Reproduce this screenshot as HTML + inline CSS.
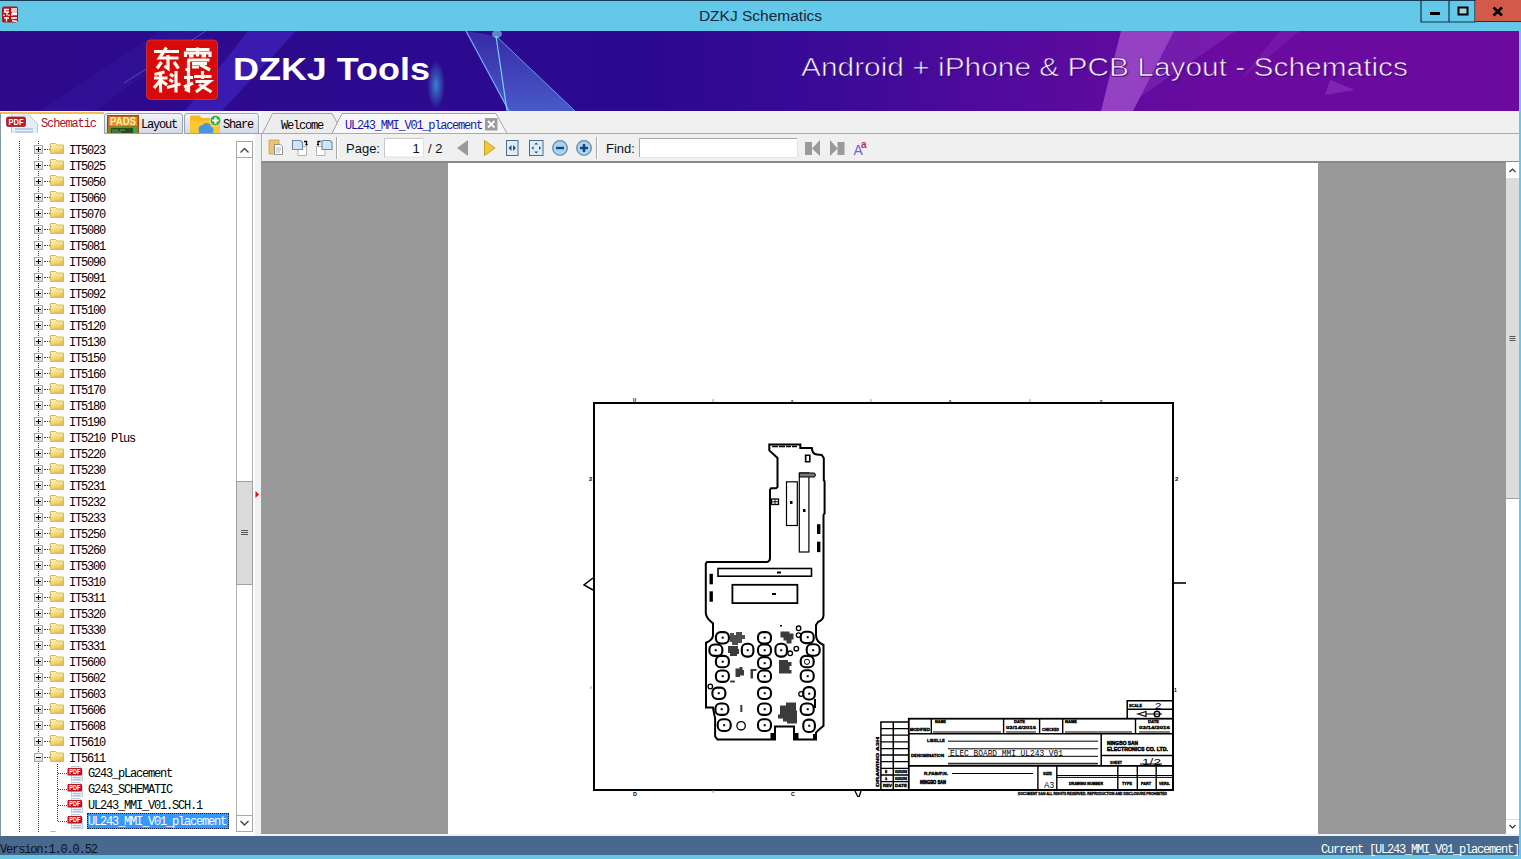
<!DOCTYPE html>
<html><head><meta charset="utf-8">
<style>
*{margin:0;padding:0;box-sizing:border-box}
html,body{width:1521px;height:859px;overflow:hidden;background:#64c9e9;font-family:"Liberation Sans",sans-serif;position:relative}
.abs{position:absolute}
.mono{font-family:"Liberation Mono",monospace;font-size:12px;letter-spacing:-1.2px;white-space:pre}
#topline{left:0;top:0;width:1521px;height:1px;background:#173a52}
#title{left:0;top:1px;width:1521px;height:30px;text-align:center;font-size:15.5px;line-height:30px;color:#10283a;padding-left:0}
#banner{left:0;top:31px;width:1519px;height:80px;overflow:hidden}
#tabbar{left:0;top:111px;width:261px;height:22px;background:#f4f6f9}
.ltab{z-index:2;top:113px;height:21px;border:1px solid #98a4b4;background:linear-gradient(#f2f3f9,#d6dae8);border-radius:3px 3px 0 0}
#tabSch{left:0;top:112px;width:104px;height:22px;background:#fff;border-top:2px solid #f5bd4a;border-left:1px solid #8a9aa4}
#leftpanel{left:0;top:133px;width:253px;height:703px;background:#fff;border-left:1px solid #7e98a2;overflow:hidden}
#splitter{left:253px;top:133px;width:8px;height:703px;border-top:1px solid #a4aab4;background:linear-gradient(90deg,#fbfcfd 0,#fbfcfd 2px,#eef2f5 2px)}
#doctabs{left:261px;top:111px;width:1258px;height:22px;background:#f0f0f0}
#toolbar{left:261px;top:133px;width:1258px;height:30px;background:#f0f0f0;border-top:1px solid #a4acb4;border-bottom:2px solid #8a8a8a;border-left:1px solid #a4acb4}
#docarea{left:261px;top:163px;width:1245px;height:671px;background:#999999}
#page{left:187px;top:0;width:870px;height:671px;background:#fff}
#vscroll{left:1506px;top:162px;width:13px;height:672px;background:#fff}
#strip{left:261px;top:834px;width:1258px;height:2px;background:#eef2f6}
#status{left:0;top:836px;width:1519px;height:19px;background:#48688e}
.row{position:absolute;left:0;height:16px;width:236px}
.row .t{position:absolute;left:69px;top:2px;font-family:"Liberation Mono",monospace;font-size:12px;letter-spacing:-1.2px;line-height:16px;color:#000;white-space:pre}
.row .t2{position:absolute;left:87px;top:1px;font-family:"Liberation Mono",monospace;font-size:12px;letter-spacing:-1.2px;line-height:16px;color:#000;white-space:pre;padding:0 1px;height:16px}
.row .t2.sel{background:#3399ff;color:#fff;outline:1px dotted #0a2050;outline-offset:-1px;left:87px;top:0;width:142px;height:16px;line-height:18px}
.fd{position:absolute;left:50px;top:1px}
.pb{position:absolute;left:34px;top:4px;width:9px;height:9px;border:1px solid #a8a8a8;background:linear-gradient(#fbfbfb,#dcdcdc)}
.pb .h{position:absolute;left:1px;top:3px;width:5px;height:1px;background:#000}
.pb .v{position:absolute;left:3px;top:1px;width:1px;height:5px;background:#000}
.dh{position:absolute;left:44px;top:8px;width:6px;border-top:1px dotted #444}
.dh2{position:absolute;left:58px;top:8px;width:9px;border-top:1px dotted #444}
.pdf{position:absolute;left:67px;top:0px;width:17px;height:16px}
.tbtxt{position:absolute;font-size:13px;color:#111;line-height:16px;margin-top:1px}
.sep{position:absolute;top:137px;width:1px;height:22px;background:#a8a8a8;border-right:1px solid #fff}
</style></head><body>
<div id="topline" class="abs"></div>
<div id="title" class="abs">DZKJ Schematics</div>
<svg class="abs" style="left:0;top:0" width="1521" height="31">
<rect x="2" y="6.5" width="16" height="16" rx="2" fill="#b01414"/>
<g stroke="#fff" stroke-width="1.3" fill="none"><path d="M4 9.5h5M5.5 9l-1 3h4.5M7 11.5v4M4.5 14.5l-1 1.5M8.5 14.5l1 1.5 M11 9h6M11 11h6M12 13v3M12 13h5M13 14.5h4M4 18h5M6.5 17v4.5M11 18h6M14 17v2M12 20.5l5 1"/></g>
<path d="M1421 0 V22 H1475 V0 M1449 0 V22" fill="none" stroke="#163048" stroke-width="1.2"/>
<rect x="1475.5" y="0" width="45.5" height="21.5" fill="#d35a4a"/>
<path d="M1475.5 21.5 H1521" stroke="#163048" stroke-width="1"/>
<rect x="1430" y="12" width="10" height="3" fill="#000"/>
<rect x="1458.5" y="7.5" width="9" height="7" fill="#9cd8ea" stroke="#000" stroke-width="2"/>
<path d="M1493.5 7.5 L1502 15.5 M1502 7.5 L1493.5 15.5" stroke="#000" stroke-width="2.6"/>
</svg>
<div id="banner" class="abs"><svg width="1519" height="80" viewBox="0 31 1519 80" style="position:absolute;left:0;top:0">
<defs>
<linearGradient id="bg1" gradientUnits="userSpaceOnUse" x1="0" y1="0" x2="1519" y2="0">
<stop offset="0" stop-color="#2e0a8c"/><stop offset="0.3" stop-color="#2c0a90"/><stop offset="0.42" stop-color="#2a0890"/><stop offset="0.55" stop-color="#3c0a98"/><stop offset="0.7" stop-color="#5a0a9e"/><stop offset="0.8" stop-color="#6a0aa0"/><stop offset="1" stop-color="#6c0a9e"/>
</linearGradient>
<linearGradient id="tri" x1="0" y1="0" x2="0" y2="1"><stop offset="0" stop-color="#5a8ae8" stop-opacity="0.25"/><stop offset="1" stop-color="#5a90f0" stop-opacity="0.6"/></linearGradient>
<radialGradient id="glow" cx="0.5" cy="0.5" r="0.5"><stop offset="0" stop-color="#3aa0e0" stop-opacity="0.8"/><stop offset="1" stop-color="#3aa0e0" stop-opacity="0"/></radialGradient>
<filter id="sh" x="-5%" y="-20%" width="110%" height="140%"><feDropShadow dx="1" dy="1" stdDeviation="1" flood-color="#200040" flood-opacity="0.8"/></filter>
</defs>
<rect x="0" y="31" width="1519" height="80" fill="url(#bg1)"/>
<polygon points="160,31 205,31 95,111 40,111" fill="#3420a8" opacity="0.3"/><polyline points="206,31 124,83" stroke="#8080f0" stroke-width="1" opacity="0.5" fill="none"/>
<polygon points="248,31 296,31 222,111 185,111" fill="#4a30d8" opacity="0.45"/>
<polygon points="466,31 496,36 575,111 509,111" fill="url(#tri)"/>
<polyline points="466,31 509,111" stroke="#7ab0f8" stroke-width="1.2" fill="none"/>
<polyline points="496,36 507,111" stroke="#7ad0f8" stroke-width="1.2" fill="none"/>
<polyline points="496,36 575,111" stroke="#6a9af0" stroke-width="1" fill="none"/>
<ellipse cx="497" cy="34" rx="5" ry="4" fill="#9ff" opacity="0.5"/>
<ellipse cx="436" cy="85" rx="9" ry="24" fill="url(#glow)"/>
<polygon points="1121,31 1174,31 1133,111 1101,111" fill="#c070e0" opacity="0.55"/>
<polygon points="1174,31 1236,31 1150,90 1120,111" fill="#9040c8" opacity="0.35"/>
<polygon points="1280,31 1300,31 1240,80" fill="#9040c8" opacity="0.25"/>
<polygon points="1330,80 1355,90 1325,95" fill="#9a50d0" opacity="0.4"/>
<rect x="146.5" y="40" width="71" height="59.5" rx="4" fill="#d80a0a" stroke="#e04848" stroke-width="0.6"/>
<g stroke="#fff8f0" stroke-width="3.2" fill="none" stroke-linecap="butt" stroke-linejoin="miter">
<path d="M154 51.5 h25 M166.5 47.5 l-7 10.5 h19 M168 55 v13.5 l-3.5 -2.5 M161.5 62 l-4.5 6.5 M174 62 l4.5 6.5"/>
<path d="M186 49.5 h23.5 M197.5 47.5 v9 M185.5 57 v-4 h24.5 v4 M189 56 h4.5 M201.5 56 h4.5 M187.5 60 h22 M188.5 60 v9.5 l-3 0 M192 63.5 h15 M192 67 h7 M200 64.5 l10 5.5"/>
<path d="M164.5 72 l-10 2.5 M154 78 h13.5 M160.5 73 v19.5 M160.5 80 l-6.5 8 M161 80.5 l6 4.5 M170 74 l3.5 2.5 M169.5 79.5 l3.5 2.5 M167 87.5 l13.5 -3.5 M176 71 v21.5"/>
<path d="M184 77.5 h9 M188.5 71 v19.5 l-3.5 -1.5 M184 87 l9 -4 M194 76.5 h17.5 M202.5 71 v8 M195.5 81.5 h14 l-13.5 10.5 M199 84.5 l12.5 7.5"/>
</g>
<text x="233" y="79.5" font-family="Liberation Sans" font-weight="bold" font-size="30.5" fill="#fff" textLength="197" lengthAdjust="spacingAndGlyphs">DZKJ Tools</text>
<text x="802" y="76.5" font-family="Liberation Sans" font-size="26" fill="#1a0040" opacity="0.55" textLength="607" lengthAdjust="spacingAndGlyphs">Android + iPhone &amp; PCB Layout - Schematics</text><text x="801" y="75.5" font-family="Liberation Sans" font-size="26" fill="#fff" stroke="url(#bg1)" stroke-width="0.7" paint-order="fill" textLength="607" lengthAdjust="spacingAndGlyphs">Android + iPhone &amp; PCB Layout - Schematics</text>
</svg></div>
<div id="tabbar" class="abs"></div>
<div id="tabSch" class="abs"></div>
<div class="abs ltab" style="left:104px;width:79px"></div>
<div class="abs ltab" style="left:184px;width:75px"></div>
<svg class="abs" style="left:0;top:108px;z-index:3" width="261" height="25">
<!-- schematic pdf icon -->
<path d="M11.5 5.5 h16 l10 10 v17 h-26 z" fill="#e4eef6" stroke="#b8c8d8" stroke-width="1"/>
<path d="M15 21 h18 M15 24 h18 M17 27 h14" stroke="#a8c4e0" stroke-width="1.3"/>
<rect x="6.5" y="9" width="19" height="9.5" rx="1.5" fill="#c01828" stroke="#801018" stroke-width="0.6"/>
<text x="16" y="17" font-family="Liberation Sans" font-weight="bold" font-size="8.5" fill="#fff" text-anchor="middle" textLength="15" lengthAdjust="spacingAndGlyphs">PDF</text>
<!-- pads -->
<rect x="107.5" y="7.5" width="31" height="19" fill="#c86418" stroke="#9a4a10" stroke-width="1"/>
<rect x="109" y="9" width="28" height="9" fill="#e88a2a"/>
<text x="123" y="17.3" font-family="Liberation Sans" font-weight="bold" font-size="10.5" fill="#fff2a8" text-anchor="middle" textLength="26" lengthAdjust="spacingAndGlyphs">PADS</text>
<rect x="109" y="18.5" width="28" height="8" fill="#4aa032"/>
<rect x="111" y="20" width="22" height="6" fill="#2a4a22"/>
<path d="M112 22 h6 M120 22 h5 M112 24 h9" stroke="#6ac050" stroke-width="0.8"/>
<!-- share -->
<path d="M190 9 q0 -1.5 1.5 -1.5 h8 l2.5 2.5 h17 q1 0 1 1 v15 h-30 z" fill="#f8b820"/>
<path d="M190 12.5 h30 v13.5 h-30 z" fill="#fcc830"/>
<circle cx="202" cy="21" r="3.5" fill="#4a94e0"/><circle cx="206.5" cy="19.5" r="4.5" fill="#4a94e0"/><circle cx="210.5" cy="22" r="3" fill="#4a94e0"/><rect x="199" y="21" width="14" height="4" fill="#4a94e0"/>
<circle cx="215.5" cy="12.5" r="5.3" fill="#38a838" stroke="#e8f8e8" stroke-width="0.8"/>
<path d="M212.3 12.5 h6.4 M215.5 9.3 v6.4" stroke="#fff" stroke-width="2.2"/>
</svg>
<div class="abs mono" style="z-index:3;left:41px;top:116px;color:#a8102a;line-height:16px;letter-spacing:-1.1px">Schematic</div>
<div class="abs mono" style="z-index:3;left:141px;top:117px;color:#000;line-height:16px">Layout</div>
<div class="abs mono" style="z-index:3;left:223px;top:117px;color:#000;line-height:16px">Share</div>

<div id="leftpanel" class="abs">
<svg style="position:absolute;left:0;top:0" width="253" height="703">
<path d="M18.5 8 V699" stroke="#333" stroke-width="1" stroke-dasharray="1 1"/>
<path d="M37.5 8 V699" stroke="#333" stroke-width="1" stroke-dasharray="1 1"/>
<path d="M56.5 631 V688" stroke="#333" stroke-width="1" stroke-dasharray="1 1"/>
<rect x="235.5" y="8.5" width="16" height="690" fill="#fff" stroke="#b4b4b4"/>
<rect x="235.5" y="8.5" width="16" height="16" fill="#fff" stroke="#a8a8a8"/>
<path d="M239.5 19.5 l4 -4 l4 4" stroke="#444" fill="none" stroke-width="1.4"/>
<rect x="235.5" y="348.5" width="16" height="103" fill="#dadada" stroke="#a0a0a0"/>
<path d="M240 397.5 h7 M240 399.5 h7 M240 401.5 h7" stroke="#555" stroke-width="1"/>
<rect x="235.5" y="682.5" width="16" height="16" fill="#fff" stroke="#a8a8a8"/>
<path d="M239.5 688 l4 4 l4 -4" stroke="#444" fill="none" stroke-width="1.4"/>
</svg>
<div style="position:absolute;left:-1px;top:0;width:255px;height:699px;overflow:hidden"><div style="position:absolute;left:0;top:-133px;width:255px;height:860px">
<div class="row" style="top:141px"><span class="pb"><i class=h></i><i class=v></i></span><span class="dh"></span><svg class="fd" width="15" height="13" viewBox="0 0 15 13"><defs><linearGradient id="fg" x1="0" y1="0" x2="0.35" y2="1"><stop offset="0" stop-color="#fdf4c4"/><stop offset="0.6" stop-color="#f6dc88"/><stop offset="1" stop-color="#e8c050"/></linearGradient></defs><path d="M0.5 1.5 h5 l1.5 1.5 h6.5 v8.5 h-13 z" fill="url(#fg)" stroke="#dcb850" stroke-width="1"/></svg><span class="t">IT5023</span></div>
<div class="row" style="top:157px"><span class="pb"><i class=h></i><i class=v></i></span><span class="dh"></span><svg class="fd" width="15" height="13" viewBox="0 0 15 13"><defs><linearGradient id="fg" x1="0" y1="0" x2="0.35" y2="1"><stop offset="0" stop-color="#fdf4c4"/><stop offset="0.6" stop-color="#f6dc88"/><stop offset="1" stop-color="#e8c050"/></linearGradient></defs><path d="M0.5 1.5 h5 l1.5 1.5 h6.5 v8.5 h-13 z" fill="url(#fg)" stroke="#dcb850" stroke-width="1"/></svg><span class="t">IT5025</span></div>
<div class="row" style="top:173px"><span class="pb"><i class=h></i><i class=v></i></span><span class="dh"></span><svg class="fd" width="15" height="13" viewBox="0 0 15 13"><defs><linearGradient id="fg" x1="0" y1="0" x2="0.35" y2="1"><stop offset="0" stop-color="#fdf4c4"/><stop offset="0.6" stop-color="#f6dc88"/><stop offset="1" stop-color="#e8c050"/></linearGradient></defs><path d="M0.5 1.5 h5 l1.5 1.5 h6.5 v8.5 h-13 z" fill="url(#fg)" stroke="#dcb850" stroke-width="1"/></svg><span class="t">IT5050</span></div>
<div class="row" style="top:189px"><span class="pb"><i class=h></i><i class=v></i></span><span class="dh"></span><svg class="fd" width="15" height="13" viewBox="0 0 15 13"><defs><linearGradient id="fg" x1="0" y1="0" x2="0.35" y2="1"><stop offset="0" stop-color="#fdf4c4"/><stop offset="0.6" stop-color="#f6dc88"/><stop offset="1" stop-color="#e8c050"/></linearGradient></defs><path d="M0.5 1.5 h5 l1.5 1.5 h6.5 v8.5 h-13 z" fill="url(#fg)" stroke="#dcb850" stroke-width="1"/></svg><span class="t">IT5060</span></div>
<div class="row" style="top:205px"><span class="pb"><i class=h></i><i class=v></i></span><span class="dh"></span><svg class="fd" width="15" height="13" viewBox="0 0 15 13"><defs><linearGradient id="fg" x1="0" y1="0" x2="0.35" y2="1"><stop offset="0" stop-color="#fdf4c4"/><stop offset="0.6" stop-color="#f6dc88"/><stop offset="1" stop-color="#e8c050"/></linearGradient></defs><path d="M0.5 1.5 h5 l1.5 1.5 h6.5 v8.5 h-13 z" fill="url(#fg)" stroke="#dcb850" stroke-width="1"/></svg><span class="t">IT5070</span></div>
<div class="row" style="top:221px"><span class="pb"><i class=h></i><i class=v></i></span><span class="dh"></span><svg class="fd" width="15" height="13" viewBox="0 0 15 13"><defs><linearGradient id="fg" x1="0" y1="0" x2="0.35" y2="1"><stop offset="0" stop-color="#fdf4c4"/><stop offset="0.6" stop-color="#f6dc88"/><stop offset="1" stop-color="#e8c050"/></linearGradient></defs><path d="M0.5 1.5 h5 l1.5 1.5 h6.5 v8.5 h-13 z" fill="url(#fg)" stroke="#dcb850" stroke-width="1"/></svg><span class="t">IT5080</span></div>
<div class="row" style="top:237px"><span class="pb"><i class=h></i><i class=v></i></span><span class="dh"></span><svg class="fd" width="15" height="13" viewBox="0 0 15 13"><defs><linearGradient id="fg" x1="0" y1="0" x2="0.35" y2="1"><stop offset="0" stop-color="#fdf4c4"/><stop offset="0.6" stop-color="#f6dc88"/><stop offset="1" stop-color="#e8c050"/></linearGradient></defs><path d="M0.5 1.5 h5 l1.5 1.5 h6.5 v8.5 h-13 z" fill="url(#fg)" stroke="#dcb850" stroke-width="1"/></svg><span class="t">IT5081</span></div>
<div class="row" style="top:253px"><span class="pb"><i class=h></i><i class=v></i></span><span class="dh"></span><svg class="fd" width="15" height="13" viewBox="0 0 15 13"><defs><linearGradient id="fg" x1="0" y1="0" x2="0.35" y2="1"><stop offset="0" stop-color="#fdf4c4"/><stop offset="0.6" stop-color="#f6dc88"/><stop offset="1" stop-color="#e8c050"/></linearGradient></defs><path d="M0.5 1.5 h5 l1.5 1.5 h6.5 v8.5 h-13 z" fill="url(#fg)" stroke="#dcb850" stroke-width="1"/></svg><span class="t">IT5090</span></div>
<div class="row" style="top:269px"><span class="pb"><i class=h></i><i class=v></i></span><span class="dh"></span><svg class="fd" width="15" height="13" viewBox="0 0 15 13"><defs><linearGradient id="fg" x1="0" y1="0" x2="0.35" y2="1"><stop offset="0" stop-color="#fdf4c4"/><stop offset="0.6" stop-color="#f6dc88"/><stop offset="1" stop-color="#e8c050"/></linearGradient></defs><path d="M0.5 1.5 h5 l1.5 1.5 h6.5 v8.5 h-13 z" fill="url(#fg)" stroke="#dcb850" stroke-width="1"/></svg><span class="t">IT5091</span></div>
<div class="row" style="top:285px"><span class="pb"><i class=h></i><i class=v></i></span><span class="dh"></span><svg class="fd" width="15" height="13" viewBox="0 0 15 13"><defs><linearGradient id="fg" x1="0" y1="0" x2="0.35" y2="1"><stop offset="0" stop-color="#fdf4c4"/><stop offset="0.6" stop-color="#f6dc88"/><stop offset="1" stop-color="#e8c050"/></linearGradient></defs><path d="M0.5 1.5 h5 l1.5 1.5 h6.5 v8.5 h-13 z" fill="url(#fg)" stroke="#dcb850" stroke-width="1"/></svg><span class="t">IT5092</span></div>
<div class="row" style="top:301px"><span class="pb"><i class=h></i><i class=v></i></span><span class="dh"></span><svg class="fd" width="15" height="13" viewBox="0 0 15 13"><defs><linearGradient id="fg" x1="0" y1="0" x2="0.35" y2="1"><stop offset="0" stop-color="#fdf4c4"/><stop offset="0.6" stop-color="#f6dc88"/><stop offset="1" stop-color="#e8c050"/></linearGradient></defs><path d="M0.5 1.5 h5 l1.5 1.5 h6.5 v8.5 h-13 z" fill="url(#fg)" stroke="#dcb850" stroke-width="1"/></svg><span class="t">IT5100</span></div>
<div class="row" style="top:317px"><span class="pb"><i class=h></i><i class=v></i></span><span class="dh"></span><svg class="fd" width="15" height="13" viewBox="0 0 15 13"><defs><linearGradient id="fg" x1="0" y1="0" x2="0.35" y2="1"><stop offset="0" stop-color="#fdf4c4"/><stop offset="0.6" stop-color="#f6dc88"/><stop offset="1" stop-color="#e8c050"/></linearGradient></defs><path d="M0.5 1.5 h5 l1.5 1.5 h6.5 v8.5 h-13 z" fill="url(#fg)" stroke="#dcb850" stroke-width="1"/></svg><span class="t">IT5120</span></div>
<div class="row" style="top:333px"><span class="pb"><i class=h></i><i class=v></i></span><span class="dh"></span><svg class="fd" width="15" height="13" viewBox="0 0 15 13"><defs><linearGradient id="fg" x1="0" y1="0" x2="0.35" y2="1"><stop offset="0" stop-color="#fdf4c4"/><stop offset="0.6" stop-color="#f6dc88"/><stop offset="1" stop-color="#e8c050"/></linearGradient></defs><path d="M0.5 1.5 h5 l1.5 1.5 h6.5 v8.5 h-13 z" fill="url(#fg)" stroke="#dcb850" stroke-width="1"/></svg><span class="t">IT5130</span></div>
<div class="row" style="top:349px"><span class="pb"><i class=h></i><i class=v></i></span><span class="dh"></span><svg class="fd" width="15" height="13" viewBox="0 0 15 13"><defs><linearGradient id="fg" x1="0" y1="0" x2="0.35" y2="1"><stop offset="0" stop-color="#fdf4c4"/><stop offset="0.6" stop-color="#f6dc88"/><stop offset="1" stop-color="#e8c050"/></linearGradient></defs><path d="M0.5 1.5 h5 l1.5 1.5 h6.5 v8.5 h-13 z" fill="url(#fg)" stroke="#dcb850" stroke-width="1"/></svg><span class="t">IT5150</span></div>
<div class="row" style="top:365px"><span class="pb"><i class=h></i><i class=v></i></span><span class="dh"></span><svg class="fd" width="15" height="13" viewBox="0 0 15 13"><defs><linearGradient id="fg" x1="0" y1="0" x2="0.35" y2="1"><stop offset="0" stop-color="#fdf4c4"/><stop offset="0.6" stop-color="#f6dc88"/><stop offset="1" stop-color="#e8c050"/></linearGradient></defs><path d="M0.5 1.5 h5 l1.5 1.5 h6.5 v8.5 h-13 z" fill="url(#fg)" stroke="#dcb850" stroke-width="1"/></svg><span class="t">IT5160</span></div>
<div class="row" style="top:381px"><span class="pb"><i class=h></i><i class=v></i></span><span class="dh"></span><svg class="fd" width="15" height="13" viewBox="0 0 15 13"><defs><linearGradient id="fg" x1="0" y1="0" x2="0.35" y2="1"><stop offset="0" stop-color="#fdf4c4"/><stop offset="0.6" stop-color="#f6dc88"/><stop offset="1" stop-color="#e8c050"/></linearGradient></defs><path d="M0.5 1.5 h5 l1.5 1.5 h6.5 v8.5 h-13 z" fill="url(#fg)" stroke="#dcb850" stroke-width="1"/></svg><span class="t">IT5170</span></div>
<div class="row" style="top:397px"><span class="pb"><i class=h></i><i class=v></i></span><span class="dh"></span><svg class="fd" width="15" height="13" viewBox="0 0 15 13"><defs><linearGradient id="fg" x1="0" y1="0" x2="0.35" y2="1"><stop offset="0" stop-color="#fdf4c4"/><stop offset="0.6" stop-color="#f6dc88"/><stop offset="1" stop-color="#e8c050"/></linearGradient></defs><path d="M0.5 1.5 h5 l1.5 1.5 h6.5 v8.5 h-13 z" fill="url(#fg)" stroke="#dcb850" stroke-width="1"/></svg><span class="t">IT5180</span></div>
<div class="row" style="top:413px"><span class="pb"><i class=h></i><i class=v></i></span><span class="dh"></span><svg class="fd" width="15" height="13" viewBox="0 0 15 13"><defs><linearGradient id="fg" x1="0" y1="0" x2="0.35" y2="1"><stop offset="0" stop-color="#fdf4c4"/><stop offset="0.6" stop-color="#f6dc88"/><stop offset="1" stop-color="#e8c050"/></linearGradient></defs><path d="M0.5 1.5 h5 l1.5 1.5 h6.5 v8.5 h-13 z" fill="url(#fg)" stroke="#dcb850" stroke-width="1"/></svg><span class="t">IT5190</span></div>
<div class="row" style="top:429px"><span class="pb"><i class=h></i><i class=v></i></span><span class="dh"></span><svg class="fd" width="15" height="13" viewBox="0 0 15 13"><defs><linearGradient id="fg" x1="0" y1="0" x2="0.35" y2="1"><stop offset="0" stop-color="#fdf4c4"/><stop offset="0.6" stop-color="#f6dc88"/><stop offset="1" stop-color="#e8c050"/></linearGradient></defs><path d="M0.5 1.5 h5 l1.5 1.5 h6.5 v8.5 h-13 z" fill="url(#fg)" stroke="#dcb850" stroke-width="1"/></svg><span class="t">IT5210 Plus</span></div>
<div class="row" style="top:445px"><span class="pb"><i class=h></i><i class=v></i></span><span class="dh"></span><svg class="fd" width="15" height="13" viewBox="0 0 15 13"><defs><linearGradient id="fg" x1="0" y1="0" x2="0.35" y2="1"><stop offset="0" stop-color="#fdf4c4"/><stop offset="0.6" stop-color="#f6dc88"/><stop offset="1" stop-color="#e8c050"/></linearGradient></defs><path d="M0.5 1.5 h5 l1.5 1.5 h6.5 v8.5 h-13 z" fill="url(#fg)" stroke="#dcb850" stroke-width="1"/></svg><span class="t">IT5220</span></div>
<div class="row" style="top:461px"><span class="pb"><i class=h></i><i class=v></i></span><span class="dh"></span><svg class="fd" width="15" height="13" viewBox="0 0 15 13"><defs><linearGradient id="fg" x1="0" y1="0" x2="0.35" y2="1"><stop offset="0" stop-color="#fdf4c4"/><stop offset="0.6" stop-color="#f6dc88"/><stop offset="1" stop-color="#e8c050"/></linearGradient></defs><path d="M0.5 1.5 h5 l1.5 1.5 h6.5 v8.5 h-13 z" fill="url(#fg)" stroke="#dcb850" stroke-width="1"/></svg><span class="t">IT5230</span></div>
<div class="row" style="top:477px"><span class="pb"><i class=h></i><i class=v></i></span><span class="dh"></span><svg class="fd" width="15" height="13" viewBox="0 0 15 13"><defs><linearGradient id="fg" x1="0" y1="0" x2="0.35" y2="1"><stop offset="0" stop-color="#fdf4c4"/><stop offset="0.6" stop-color="#f6dc88"/><stop offset="1" stop-color="#e8c050"/></linearGradient></defs><path d="M0.5 1.5 h5 l1.5 1.5 h6.5 v8.5 h-13 z" fill="url(#fg)" stroke="#dcb850" stroke-width="1"/></svg><span class="t">IT5231</span></div>
<div class="row" style="top:493px"><span class="pb"><i class=h></i><i class=v></i></span><span class="dh"></span><svg class="fd" width="15" height="13" viewBox="0 0 15 13"><defs><linearGradient id="fg" x1="0" y1="0" x2="0.35" y2="1"><stop offset="0" stop-color="#fdf4c4"/><stop offset="0.6" stop-color="#f6dc88"/><stop offset="1" stop-color="#e8c050"/></linearGradient></defs><path d="M0.5 1.5 h5 l1.5 1.5 h6.5 v8.5 h-13 z" fill="url(#fg)" stroke="#dcb850" stroke-width="1"/></svg><span class="t">IT5232</span></div>
<div class="row" style="top:509px"><span class="pb"><i class=h></i><i class=v></i></span><span class="dh"></span><svg class="fd" width="15" height="13" viewBox="0 0 15 13"><defs><linearGradient id="fg" x1="0" y1="0" x2="0.35" y2="1"><stop offset="0" stop-color="#fdf4c4"/><stop offset="0.6" stop-color="#f6dc88"/><stop offset="1" stop-color="#e8c050"/></linearGradient></defs><path d="M0.5 1.5 h5 l1.5 1.5 h6.5 v8.5 h-13 z" fill="url(#fg)" stroke="#dcb850" stroke-width="1"/></svg><span class="t">IT5233</span></div>
<div class="row" style="top:525px"><span class="pb"><i class=h></i><i class=v></i></span><span class="dh"></span><svg class="fd" width="15" height="13" viewBox="0 0 15 13"><defs><linearGradient id="fg" x1="0" y1="0" x2="0.35" y2="1"><stop offset="0" stop-color="#fdf4c4"/><stop offset="0.6" stop-color="#f6dc88"/><stop offset="1" stop-color="#e8c050"/></linearGradient></defs><path d="M0.5 1.5 h5 l1.5 1.5 h6.5 v8.5 h-13 z" fill="url(#fg)" stroke="#dcb850" stroke-width="1"/></svg><span class="t">IT5250</span></div>
<div class="row" style="top:541px"><span class="pb"><i class=h></i><i class=v></i></span><span class="dh"></span><svg class="fd" width="15" height="13" viewBox="0 0 15 13"><defs><linearGradient id="fg" x1="0" y1="0" x2="0.35" y2="1"><stop offset="0" stop-color="#fdf4c4"/><stop offset="0.6" stop-color="#f6dc88"/><stop offset="1" stop-color="#e8c050"/></linearGradient></defs><path d="M0.5 1.5 h5 l1.5 1.5 h6.5 v8.5 h-13 z" fill="url(#fg)" stroke="#dcb850" stroke-width="1"/></svg><span class="t">IT5260</span></div>
<div class="row" style="top:557px"><span class="pb"><i class=h></i><i class=v></i></span><span class="dh"></span><svg class="fd" width="15" height="13" viewBox="0 0 15 13"><defs><linearGradient id="fg" x1="0" y1="0" x2="0.35" y2="1"><stop offset="0" stop-color="#fdf4c4"/><stop offset="0.6" stop-color="#f6dc88"/><stop offset="1" stop-color="#e8c050"/></linearGradient></defs><path d="M0.5 1.5 h5 l1.5 1.5 h6.5 v8.5 h-13 z" fill="url(#fg)" stroke="#dcb850" stroke-width="1"/></svg><span class="t">IT5300</span></div>
<div class="row" style="top:573px"><span class="pb"><i class=h></i><i class=v></i></span><span class="dh"></span><svg class="fd" width="15" height="13" viewBox="0 0 15 13"><defs><linearGradient id="fg" x1="0" y1="0" x2="0.35" y2="1"><stop offset="0" stop-color="#fdf4c4"/><stop offset="0.6" stop-color="#f6dc88"/><stop offset="1" stop-color="#e8c050"/></linearGradient></defs><path d="M0.5 1.5 h5 l1.5 1.5 h6.5 v8.5 h-13 z" fill="url(#fg)" stroke="#dcb850" stroke-width="1"/></svg><span class="t">IT5310</span></div>
<div class="row" style="top:589px"><span class="pb"><i class=h></i><i class=v></i></span><span class="dh"></span><svg class="fd" width="15" height="13" viewBox="0 0 15 13"><defs><linearGradient id="fg" x1="0" y1="0" x2="0.35" y2="1"><stop offset="0" stop-color="#fdf4c4"/><stop offset="0.6" stop-color="#f6dc88"/><stop offset="1" stop-color="#e8c050"/></linearGradient></defs><path d="M0.5 1.5 h5 l1.5 1.5 h6.5 v8.5 h-13 z" fill="url(#fg)" stroke="#dcb850" stroke-width="1"/></svg><span class="t">IT5311</span></div>
<div class="row" style="top:605px"><span class="pb"><i class=h></i><i class=v></i></span><span class="dh"></span><svg class="fd" width="15" height="13" viewBox="0 0 15 13"><defs><linearGradient id="fg" x1="0" y1="0" x2="0.35" y2="1"><stop offset="0" stop-color="#fdf4c4"/><stop offset="0.6" stop-color="#f6dc88"/><stop offset="1" stop-color="#e8c050"/></linearGradient></defs><path d="M0.5 1.5 h5 l1.5 1.5 h6.5 v8.5 h-13 z" fill="url(#fg)" stroke="#dcb850" stroke-width="1"/></svg><span class="t">IT5320</span></div>
<div class="row" style="top:621px"><span class="pb"><i class=h></i><i class=v></i></span><span class="dh"></span><svg class="fd" width="15" height="13" viewBox="0 0 15 13"><defs><linearGradient id="fg" x1="0" y1="0" x2="0.35" y2="1"><stop offset="0" stop-color="#fdf4c4"/><stop offset="0.6" stop-color="#f6dc88"/><stop offset="1" stop-color="#e8c050"/></linearGradient></defs><path d="M0.5 1.5 h5 l1.5 1.5 h6.5 v8.5 h-13 z" fill="url(#fg)" stroke="#dcb850" stroke-width="1"/></svg><span class="t">IT5330</span></div>
<div class="row" style="top:637px"><span class="pb"><i class=h></i><i class=v></i></span><span class="dh"></span><svg class="fd" width="15" height="13" viewBox="0 0 15 13"><defs><linearGradient id="fg" x1="0" y1="0" x2="0.35" y2="1"><stop offset="0" stop-color="#fdf4c4"/><stop offset="0.6" stop-color="#f6dc88"/><stop offset="1" stop-color="#e8c050"/></linearGradient></defs><path d="M0.5 1.5 h5 l1.5 1.5 h6.5 v8.5 h-13 z" fill="url(#fg)" stroke="#dcb850" stroke-width="1"/></svg><span class="t">IT5331</span></div>
<div class="row" style="top:653px"><span class="pb"><i class=h></i><i class=v></i></span><span class="dh"></span><svg class="fd" width="15" height="13" viewBox="0 0 15 13"><defs><linearGradient id="fg" x1="0" y1="0" x2="0.35" y2="1"><stop offset="0" stop-color="#fdf4c4"/><stop offset="0.6" stop-color="#f6dc88"/><stop offset="1" stop-color="#e8c050"/></linearGradient></defs><path d="M0.5 1.5 h5 l1.5 1.5 h6.5 v8.5 h-13 z" fill="url(#fg)" stroke="#dcb850" stroke-width="1"/></svg><span class="t">IT5600</span></div>
<div class="row" style="top:669px"><span class="pb"><i class=h></i><i class=v></i></span><span class="dh"></span><svg class="fd" width="15" height="13" viewBox="0 0 15 13"><defs><linearGradient id="fg" x1="0" y1="0" x2="0.35" y2="1"><stop offset="0" stop-color="#fdf4c4"/><stop offset="0.6" stop-color="#f6dc88"/><stop offset="1" stop-color="#e8c050"/></linearGradient></defs><path d="M0.5 1.5 h5 l1.5 1.5 h6.5 v8.5 h-13 z" fill="url(#fg)" stroke="#dcb850" stroke-width="1"/></svg><span class="t">IT5602</span></div>
<div class="row" style="top:685px"><span class="pb"><i class=h></i><i class=v></i></span><span class="dh"></span><svg class="fd" width="15" height="13" viewBox="0 0 15 13"><defs><linearGradient id="fg" x1="0" y1="0" x2="0.35" y2="1"><stop offset="0" stop-color="#fdf4c4"/><stop offset="0.6" stop-color="#f6dc88"/><stop offset="1" stop-color="#e8c050"/></linearGradient></defs><path d="M0.5 1.5 h5 l1.5 1.5 h6.5 v8.5 h-13 z" fill="url(#fg)" stroke="#dcb850" stroke-width="1"/></svg><span class="t">IT5603</span></div>
<div class="row" style="top:701px"><span class="pb"><i class=h></i><i class=v></i></span><span class="dh"></span><svg class="fd" width="15" height="13" viewBox="0 0 15 13"><defs><linearGradient id="fg" x1="0" y1="0" x2="0.35" y2="1"><stop offset="0" stop-color="#fdf4c4"/><stop offset="0.6" stop-color="#f6dc88"/><stop offset="1" stop-color="#e8c050"/></linearGradient></defs><path d="M0.5 1.5 h5 l1.5 1.5 h6.5 v8.5 h-13 z" fill="url(#fg)" stroke="#dcb850" stroke-width="1"/></svg><span class="t">IT5606</span></div>
<div class="row" style="top:717px"><span class="pb"><i class=h></i><i class=v></i></span><span class="dh"></span><svg class="fd" width="15" height="13" viewBox="0 0 15 13"><defs><linearGradient id="fg" x1="0" y1="0" x2="0.35" y2="1"><stop offset="0" stop-color="#fdf4c4"/><stop offset="0.6" stop-color="#f6dc88"/><stop offset="1" stop-color="#e8c050"/></linearGradient></defs><path d="M0.5 1.5 h5 l1.5 1.5 h6.5 v8.5 h-13 z" fill="url(#fg)" stroke="#dcb850" stroke-width="1"/></svg><span class="t">IT5608</span></div>
<div class="row" style="top:733px"><span class="pb"><i class=h></i><i class=v></i></span><span class="dh"></span><svg class="fd" width="15" height="13" viewBox="0 0 15 13"><defs><linearGradient id="fg" x1="0" y1="0" x2="0.35" y2="1"><stop offset="0" stop-color="#fdf4c4"/><stop offset="0.6" stop-color="#f6dc88"/><stop offset="1" stop-color="#e8c050"/></linearGradient></defs><path d="M0.5 1.5 h5 l1.5 1.5 h6.5 v8.5 h-13 z" fill="url(#fg)" stroke="#dcb850" stroke-width="1"/></svg><span class="t">IT5610</span></div>
<div class="row" style="top:749px"><span class="pb"><i class=h></i></span><span class="dh"></span><svg class="fd" width="15" height="13" viewBox="0 0 15 13"><defs><linearGradient id="fg" x1="0" y1="0" x2="0.35" y2="1"><stop offset="0" stop-color="#fdf4c4"/><stop offset="0.6" stop-color="#f6dc88"/><stop offset="1" stop-color="#e8c050"/></linearGradient></defs><path d="M0.5 1.5 h5 l1.5 1.5 h6.5 v8.5 h-13 z" fill="url(#fg)" stroke="#dcb850" stroke-width="1"/></svg><span class="t">IT5611</span></div>
<div class="row" style="top:765px"><span class="dh2"></span><svg class="pdf" width="17" height="16" viewBox="0 0 17 16"><path d="M4.5 1.5 h8 l3 3 v11.5 h-11 z" fill="#e4f2fa" stroke="#a8c4d8" stroke-width="0.8"/><path d="M6 12.5 h8 M6 14.5 h8" stroke="#8ac4e8" stroke-width="0.9"/><rect x="0.5" y="3" width="14.5" height="7.5" rx="1" fill="#c0102a"/><text x="7.8" y="9.2" font-family="Liberation Sans" font-weight="bold" font-size="6.8" fill="#fff" text-anchor="middle" textLength="11" lengthAdjust="spacingAndGlyphs">PDF</text></svg><span class="t2">G243_pLacement</span></div>
<div class="row" style="top:781px"><span class="dh2"></span><svg class="pdf" width="17" height="16" viewBox="0 0 17 16"><path d="M4.5 1.5 h8 l3 3 v11.5 h-11 z" fill="#e4f2fa" stroke="#a8c4d8" stroke-width="0.8"/><path d="M6 12.5 h8 M6 14.5 h8" stroke="#8ac4e8" stroke-width="0.9"/><rect x="0.5" y="3" width="14.5" height="7.5" rx="1" fill="#c0102a"/><text x="7.8" y="9.2" font-family="Liberation Sans" font-weight="bold" font-size="6.8" fill="#fff" text-anchor="middle" textLength="11" lengthAdjust="spacingAndGlyphs">PDF</text></svg><span class="t2">G243_SCHEMATIC</span></div>
<div class="row" style="top:797px"><span class="dh2"></span><svg class="pdf" width="17" height="16" viewBox="0 0 17 16"><path d="M4.5 1.5 h8 l3 3 v11.5 h-11 z" fill="#e4f2fa" stroke="#a8c4d8" stroke-width="0.8"/><path d="M6 12.5 h8 M6 14.5 h8" stroke="#8ac4e8" stroke-width="0.9"/><rect x="0.5" y="3" width="14.5" height="7.5" rx="1" fill="#c0102a"/><text x="7.8" y="9.2" font-family="Liberation Sans" font-weight="bold" font-size="6.8" fill="#fff" text-anchor="middle" textLength="11" lengthAdjust="spacingAndGlyphs">PDF</text></svg><span class="t2">UL243_MMI_V01.SCH.1</span></div>
<div class="row" style="top:813px"><span class="dh2"></span><svg class="pdf" width="17" height="16" viewBox="0 0 17 16"><path d="M4.5 1.5 h8 l3 3 v11.5 h-11 z" fill="#e4f2fa" stroke="#a8c4d8" stroke-width="0.8"/><path d="M6 12.5 h8 M6 14.5 h8" stroke="#8ac4e8" stroke-width="0.9"/><rect x="0.5" y="3" width="14.5" height="7.5" rx="1" fill="#c0102a"/><text x="7.8" y="9.2" font-family="Liberation Sans" font-weight="bold" font-size="6.8" fill="#fff" text-anchor="middle" textLength="11" lengthAdjust="spacingAndGlyphs">PDF</text></svg><span class="t2 sel">UL243_MMI_V01_placement</span></div>
<div class="row" style="top:829px"><span class="pb"><i class=h></i><i class=v></i></span><span class="dh"></span><svg class="fd" width="15" height="13" viewBox="0 0 15 13"><defs><linearGradient id="fg" x1="0" y1="0" x2="0.35" y2="1"><stop offset="0" stop-color="#fdf4c4"/><stop offset="0.6" stop-color="#f6dc88"/><stop offset="1" stop-color="#e8c050"/></linearGradient></defs><path d="M0.5 1.5 h5 l1.5 1.5 h6.5 v8.5 h-13 z" fill="url(#fg)" stroke="#dcb850" stroke-width="1"/></svg><span class="t">IT5612</span></div>
</div></div>
</div>
<div id="splitter" class="abs"></div>
<svg class="abs" style="left:253px;top:488px" width="8" height="14"><path d="M2.5 3 l3.5 3.5 l-3.5 3.5 z" fill="#d01818"/></svg>

<div id="doctabs" class="abs"></div>
<svg class="abs" style="left:261px;top:111px" width="260" height="23">
<path d="M1.5 22.5 L11.5 2.5 H71 L76.5 12.5 L71 22.5 Z" fill="#ededed" stroke="#a0a4a8" stroke-width="1"/>
<path d="M71 22.5 L81 2.5 H235 L246 22.5" fill="#f7f7f8" stroke="#a0a4a8" stroke-width="1"/>
<rect x="224" y="7" width="12.5" height="12.5" fill="#9c9c9c"/>
<path d="M227 10 l6.5 6.5 M233.5 10 l-6.5 6.5" stroke="#fff" stroke-width="1.8"/>
</svg>
<div class="abs mono" style="left:281px;top:118px;color:#000;line-height:16px">Welcome</div>
<div class="abs mono" style="left:345px;top:118px;color:#1818a8;line-height:16px;letter-spacing:-1.25px">UL243_MMI_V01_placement</div>

<div id="toolbar" class="abs"></div>
<svg class="abs" style="left:261px;top:133px" width="620" height="29">
<!-- icon1 -->
<path d="M8 7 h10 v14 h-10 z" fill="#e8c470" stroke="#c8a050" stroke-width="0.8"/>
<path d="M13.5 11.5 h6 l2 2 v8 h-8 z" fill="#fff" stroke="#888" stroke-width="0.9"/>
<path d="M15 15 h5 M15 17 h5 M15 19 h4" stroke="#9ab" stroke-width="0.8"/>
<!-- icon2 -->
<path d="M37 13.5 h8.5 v9 h-8.5 z" fill="#fff" stroke="#aaa" stroke-width="0.9"/>
<path d="M31.5 7.5 h8 l2 2 v7 h-10 z" fill="#cfe4f6" stroke="#6a8aaa" stroke-width="1.1"/>
<path d="M43 8.5 h2.5 v3.5" stroke="#000" stroke-width="1.3" fill="none"/><path d="M44 11 l1.5 2 l1.5 -2z" fill="#000"/>
<!-- icon3 -->
<path d="M55.5 13.5 h8.5 v9 h-8.5 z" fill="#fff" stroke="#aaa" stroke-width="0.9"/>
<path d="M61 7.5 h8 l2 2 v7 h-10 z" fill="#cfe4f6" stroke="#6a8aaa" stroke-width="1.1"/>
<path d="M59.5 8.5 h-2.5 v3.5" stroke="#000" stroke-width="1.3" fill="none"/><path d="M55.5 11 l1.5 2 l1.5 -2z" fill="#000"/>
<path d="M75.5 4 V26" stroke="#a8a8a8"/><path d="M76.5 4 V26" stroke="#fff"/>
<!-- page input -->
<rect x="123.5" y="5.5" width="39" height="18.5" fill="#fff" stroke="#e0e0e0"/>
<path d="M123.5 24 V5.5 H162" stroke="#c8c8c8" fill="none"/>
<!-- prev/next -->
<path d="M196 15 L207 7 V23 z" fill="#9a9a9a"/>
<path d="M223.5 7.5 L234 15 L223.5 22.5 z" fill="#f2c838" stroke="#c8a028" stroke-width="1"/>
<!-- fit width -->
<rect x="245.5" y="7.5" width="11.5" height="15" fill="#dcecf8" stroke="#4a6a90" stroke-width="1"/>
<path d="M247.5 15 l3 -3 v6 z M255 15 l-3 -3 v6 z" fill="#2a5080"/>
<!-- fit page -->
<rect x="268.5" y="7.5" width="13.5" height="15" fill="#dcecf8" stroke="#4a6a90" stroke-width="1"/>
<path d="M275.2 9.5 l2 2 h-4 z M275.2 20.5 l2 -2 h-4 z M270.5 15 l2 -2 v4 z M280 15 l-2 -2 v4 z" fill="#2a5080"/>
<!-- zoom out/in -->
<circle cx="299" cy="15" r="7.3" fill="#a8d4f4" stroke="#6a88a4" stroke-width="1.3"/>
<path d="M295 15 h8" stroke="#1a4478" stroke-width="2.4"/>
<circle cx="323" cy="15" r="7.3" fill="#a8d4f4" stroke="#6a88a4" stroke-width="1.3"/>
<path d="M319 15 h8 M323 11 v8" stroke="#1a4478" stroke-width="2.4"/>
<path d="M335.5 4 V26" stroke="#a8a8a8"/><path d="M336.5 4 V26" stroke="#fff"/>
<!-- find input -->
<rect x="378.5" y="5.5" width="158" height="19" fill="#fff" stroke="#e4e4e4"/>
<path d="M378.5 24 V5.5 H536" stroke="#a8a8a8" fill="none"/>
<!-- find prev/next -->
<path d="M544 9 h7 v13 h-7 z M551 15.5 l8 -8.5 v16 z" fill="#9a9a9a"/>
<path d="M576.5 9 h7 v13 h-7 z M576.5 15.5 l-7.5 -8.5 v16 z" fill="#9a9a9a"/>
<text x="592.5" y="21.5" font-family="Liberation Sans" font-size="14" fill="#7a5ae0">A</text>
<text x="600" y="15" font-family="Liberation Sans" font-weight="bold" font-size="10" fill="#c02880">a</text>
</svg>
<div class="abs tbtxt" style="left:346px;top:140px">Page:</div>
<div class="abs tbtxt" style="left:412.5px;top:140px">1</div>
<div class="abs tbtxt" style="left:428px;top:140px">/ 2</div>
<div class="abs tbtxt" style="left:606px;top:140px">Find:</div>

<div id="docarea" class="abs"><div id="page" class="abs"><svg width="870" height="671" viewBox="448 163 870 671" style="position:absolute;left:0;top:0" shape-rendering="geometricPrecision">
<g fill="none" stroke="#000">
<!-- frame -->
<rect x="594" y="403" width="579" height="387" stroke-width="2"/>
<path d="M1173 583 H1186" stroke-width="1.6"/>
<path d="M593 578 L584 585 L593 590" stroke-width="1.5"/>
<path d="M855 791 L858 797 M861 791 L859 797" stroke-width="1.3"/>
</g>
<g font-family="Liberation Sans" font-weight="bold" fill="#000">
<text x="589" y="481" font-size="6">2</text>
<text x="1175" y="481" font-size="6">2</text>
<text x="1174" y="692" font-size="5">1</text>
<text x="633" y="796" font-size="5.5">D</text>
<text x="791" y="796" font-size="5.5">C</text>
<text x="633" y="402" font-size="4.5">U</text>
<text x="791" y="402" font-size="4">x</text>
<text x="949" y="402" font-size="4">x</text>
<text x="1100" y="402" font-size="4">n</text>
</g>
<path d="M713 399 v3 M871 399 v3 M1030 399 v3 M713 790 v3 M591 686 v3" stroke="#888" stroke-width="0.8"/>

<!-- PCB outline -->
<path d="M769.3 444.6 H800.3 V448 H811.8 L812.5 451.5 Q814 454.5 817 454.5 L821.7 455 L823.8 458 V480 L824.6 481.5 V513.2 L823.5 515 V615 Q823.5 620 818 622 L816 625 V635 Q816 642 823.5 645 V725.8 L819.7 728.9 L816 732.6 V739.4 H794 V726.6 H775 V739.4 H717.4 L715.1 736.4 V718.3 L712.9 707.5 H706 V642.7 Q713 640 713 635 V623.4 Q706 618 705.8 613 V563.5 L707 561.9 H767.5 Q770 561 770 558 V490 L771 488.2 H776 L777.5 487 V458 L769.3 450.4 Z" fill="none" stroke="#000" stroke-width="2"/>
<g fill="none" stroke="#000" stroke-width="1.2">
<rect x="786.5" y="481.8" width="10.8" height="43.7"/>
<rect x="799.3" y="473" width="9.6" height="79"/>
<rect x="718" y="568.5" width="93.5" height="7.7" stroke-width="1.6"/>
<rect x="732.4" y="584.8" width="65" height="18.3" stroke-width="1.8"/>
<rect x="771.5" y="499" width="7" height="5.5" stroke-width="1.3"/>
<path d="M775 499 v5.5 M771.5 501.8 h7" stroke-width="0.9"/>
<path d="M772 446.5 h6 M779 446.5 h6 M786 446.5 h5 M792 446.5 h5" stroke-width="1.5"/>
</g>
<g fill="#000">
<path d="M799.5 473 h15 q2 2 0 4 h-15z" fill="#777" stroke="#000" stroke-width="1"/>
<rect x="804.8" y="454.5" width="5.8" height="8"/>
<rect x="817" y="524.2" width="3.4" height="9.8"/>
<rect x="817" y="541.7" width="3.4" height="10.4"/>
<rect x="709.5" y="573.8" width="3.4" height="10.5"/>
<rect x="709.5" y="591.3" width="3.4" height="10.4"/>
<rect x="790" y="501" width="2.5" height="3"/>
<rect x="803" y="509" width="2.5" height="3"/>
<rect x="777" y="571.5" width="4" height="2"/>
<rect x="772" y="593" width="4" height="2"/>
</g>
<rect x="806.5" y="456" width="2.5" height="5" fill="#fff"/>

<!-- keypad -->
<g fill="none" stroke="#000" stroke-width="2.1">
<rect x="715.90" y="632.10" width="13.00" height="11.40" rx="4.90"/>
<rect x="709.40" y="644.50" width="13.00" height="11.40" rx="4.90"/>
<rect x="715.90" y="655.90" width="13.00" height="11.40" rx="4.90"/>
<rect x="715.90" y="670.50" width="13.00" height="11.40" rx="4.90"/>
<rect x="712.40" y="687.60" width="13.00" height="11.40" rx="4.90"/>
<rect x="715.40" y="703.50" width="13.00" height="11.40" rx="4.90"/>
<rect x="717.70" y="719.20" width="13.00" height="11.80" rx="5.10"/>
<rect x="741.80" y="643.80" width="11.60" height="12.80" rx="5.00"/>
<rect x="758.00" y="632.10" width="13.00" height="11.40" rx="4.90"/>
<rect x="758.00" y="644.50" width="13.00" height="11.40" rx="4.90"/>
<rect x="758.00" y="657.30" width="13.00" height="11.40" rx="4.90"/>
<rect x="758.00" y="670.50" width="13.00" height="11.40" rx="4.90"/>
<rect x="758.00" y="687.60" width="13.00" height="11.40" rx="4.90"/>
<rect x="758.00" y="703.50" width="13.00" height="11.40" rx="4.90"/>
<rect x="758.00" y="719.20" width="13.00" height="11.80" rx="5.10"/>
<rect x="775.40" y="643.80" width="11.60" height="12.80" rx="5.00"/>
<rect x="800.70" y="631.70" width="13.00" height="11.40" rx="4.90"/>
<rect x="806.70" y="644.30" width="13.00" height="11.40" rx="4.90"/>
<rect x="800.70" y="655.90" width="13.00" height="11.40" rx="4.90"/>
<rect x="800.70" y="670.30" width="13.00" height="11.40" rx="4.90"/>
<rect x="803.30" y="687.10" width="11.60" height="12.40" rx="5.00"/>
<rect x="800.70" y="703.50" width="13.00" height="11.40" rx="4.90"/>
<rect x="803.30" y="719.60" width="11.60" height="12.40" rx="5.00"/>
<circle cx="741.1" cy="725.8" r="4.2" stroke-width="1.3"/>
<circle cx="807" cy="661.8" r="2.6" stroke-width="1"/>
</g>
<g fill="none" stroke="#000" stroke-width="1.3">
<circle cx="710.3" cy="686.5" r="2.3"/>
<circle cx="798.6" cy="628.3" r="2.3"/>
<circle cx="798.6" cy="635.1" r="2.3"/>
<circle cx="796.3" cy="648.7" r="2.3"/>
<circle cx="790.2" cy="653.3" r="2.3"/>
<circle cx="801.1" cy="694" r="2.3"/>
</g>
<g fill="#000">
<rect x="721.7" y="636.7" width="2" height="2"/><rect x="714.7" y="649.2" width="2" height="2"/><rect x="721.7" y="660.7" width="2" height="2"/><rect x="721.7" y="675.2" width="2" height="2"/><rect x="717.7" y="692.2" width="2" height="2"/><rect x="720.7" y="708.2" width="2" height="2"/><rect x="723.2" y="724.2" width="2" height="2"/>
<rect x="763.7" y="636.7" width="2" height="2"/><rect x="763.7" y="649.2" width="2" height="2"/><rect x="763.7" y="662.2" width="2" height="2"/><rect x="763.7" y="675.2" width="2" height="2"/><rect x="763.7" y="692.2" width="2" height="2"/><rect x="763.7" y="708.2" width="2" height="2"/><rect x="763.7" y="724.2" width="2" height="2"/>
<rect x="806.7" y="636.2" width="2" height="2"/><rect x="812.2" y="649.2" width="2" height="2"/><rect x="806.7" y="675.2" width="2" height="2"/><rect x="808.2" y="692.7" width="2" height="2"/><rect x="806.7" y="708.2" width="2" height="2"/><rect x="808.2" y="724.7" width="2" height="2"/><rect x="746.7" y="649.2" width="2" height="2"/><rect x="780.2" y="649.2" width="2" height="2"/>
<g fill="#111" opacity="0.82"><!-- blobs -->
<path d="M730 633 h4 v2 h2 v-3 h6 v3 h3 v4 h-3 v4 h-4 v2 h-6 v-3 h-2 z" opacity="0.9"/>
<path d="M728 646 h10 v3 h1 v5 h-2 v2 h-7 v-3 h-2 z"/>
<path d="M735.5 668.5 h4 v-1.5 h3 v3 h1.5 v5.5 h-4 v1.5 h-4.5 z"/>
<path d="M750.5 669 h6 v2 h-3.5 v7.5 h-2.5 z"/>
<rect x="730" y="680.5" width="5" height="2" rx="1"/>
<rect x="740.3" y="705" width="2" height="7"/>
<path d="M780.5 631.5 h9 v2 h4 v6 h-2 v4 h-5 v-3 h-3 v-3 h-3 z"/>
<path d="M779 660 h9 v2 h3.5 v4 h-2 v4 h2 v3.5 h-12.5 z"/>
<path d="M786 702.5 h10 v8 h1 v13 h-10 v-2 h-4 v-3 h-5 v-4 h2 v-9 h6 z"/>
</g><rect x="814" y="699" width="2" height="9"/>
<rect x="770.5" y="733" width="4.5" height="7"/>
<rect x="794" y="733" width="4.5" height="7"/>
<rect x="813" y="734" width="4" height="6"/>
<rect x="780" y="625" width="2" height="1.5"/>
</g>

<!-- title block -->
<g fill="none" stroke="#000">
<path d="M1127.2 718.7 V700.7 H1173 M1127.2 709.2 H1173" stroke-width="1.5"/>
<path d="M880.9 789 V721.9 H908.8 M893.3 721.9 V789" stroke-width="1.5"/>
<path d="M880.9 728.6 H908.8 M880.9 735.2 H908.8 M880.9 741.9 H908.8 M880.9 748.6 H908.8 M880.9 755 H908.8 M880.9 761.6 H908.8 M880.9 768.4 H908.8 M880.9 775 H908.8 M880.9 781.7 H908.8" stroke-width="1.3"/>
<rect x="908.8" y="718.7" width="264.2" height="71.3" stroke-width="1.8"/>
<path d="M908.8 733.7 H1173 M908.8 765.9 H1173" stroke-width="1.6"/>
<path d="M931.3 718.7 V733.7 M1003.6 718.7 V733.7 M1039.6 718.7 V733.7 M1062.7 718.7 V733.7 M1135.5 718.7 V733.7" stroke-width="1.4"/>
<path d="M1101.2 733.7 V765.9 M1101.2 755.6 H1173" stroke-width="1.5"/>
<path d="M1037.9 765.9 V790 M1056.8 765.9 V790 M1117.8 765.9 V790 M1137.3 765.9 V790 M1156.2 765.9 V790" stroke-width="1.4"/>
<path d="M1056.8 775.5 H1173 M1056.8 777.4 H1173" stroke-width="1"/>
<path d="M948 741.2 H1098 M948 748.8 H1098 M948 756.3 H1098" stroke-width="1"/>
<path d="M948 763.6 H1098" stroke-width="1.6" stroke="#333"/>
<path d="M952 773.5 H1033" stroke-width="1"/>
<path d="M933 732 H1001 M1006 732 H1036 M1065 732 H1132 M1139 732 H1170" stroke-width="1.4" stroke="#555"/>
<path d="M1140 764 H1162" stroke-width="1"/>
<path d="M1138 714 L1146 711.5 V716.5 Z M1146 714 H1162" stroke-width="1.2"/>
<circle cx="1157" cy="714" r="2.8" stroke-width="1.4"/>
</g>
<g font-family="Liberation Sans" font-weight="bold" fill="#000" stroke="#000" stroke-width="0.3">
<text x="1129" y="706.5" font-size="3.6" textLength="13" lengthAdjust="spacingAndGlyphs">SCALE</text>
<text x="910" y="730.5" font-size="3" textLength="20" lengthAdjust="spacingAndGlyphs">MODIFIED</text>
<text x="935" y="723" font-size="3" textLength="11" lengthAdjust="spacingAndGlyphs">NAME</text>
<text x="1014" y="722.5" font-size="3.2" textLength="11" lengthAdjust="spacingAndGlyphs">DATE</text>
<text x="1006" y="728.5" font-size="4.2" textLength="30" lengthAdjust="spacingAndGlyphs">03/14/2016</text>
<text x="1042" y="730.5" font-size="3" textLength="17" lengthAdjust="spacingAndGlyphs">CHECKED</text>
<text x="1065" y="723" font-size="3" textLength="12" lengthAdjust="spacingAndGlyphs">NAME</text>
<text x="1148" y="722.5" font-size="3.2" textLength="11" lengthAdjust="spacingAndGlyphs">DATE</text>
<text x="1139" y="728.5" font-size="4.2" textLength="31" lengthAdjust="spacingAndGlyphs">03/14/2016</text>
<text x="927" y="742" font-size="4" textLength="18" lengthAdjust="spacingAndGlyphs">LIBELLE</text>
<text x="911" y="756.5" font-size="3.5" textLength="33" lengthAdjust="spacingAndGlyphs">DENOMINATION</text>
<text x="1107" y="744.5" font-size="5.5" stroke-width="0.5" textLength="31" lengthAdjust="spacingAndGlyphs">NINGBO SAN</text>
<text x="1107" y="750.5" font-size="5.5" stroke-width="0.5" textLength="61" lengthAdjust="spacingAndGlyphs">ELECTRONICS CO. LTD.</text>
<text x="1110" y="763.5" font-size="3.5" textLength="12" lengthAdjust="spacingAndGlyphs">SHEET</text>
<text x="924" y="774.5" font-size="3.5" textLength="24" lengthAdjust="spacingAndGlyphs">R.FAB/P.N.</text>
<text x="920" y="784" font-size="6" stroke-width="0.6" textLength="26" lengthAdjust="spacingAndGlyphs">NINGBO SAN</text>
<text x="1043" y="775" font-size="3" textLength="9" lengthAdjust="spacingAndGlyphs">SIZE</text>
<text x="1069" y="785" font-size="3" textLength="34" lengthAdjust="spacingAndGlyphs">DRAWING NUMBER</text>
<text x="1122" y="785" font-size="3" textLength="10" lengthAdjust="spacingAndGlyphs">TYPE</text>
<text x="1141" y="785" font-size="3" textLength="10" lengthAdjust="spacingAndGlyphs">PART</text>
<text x="1159" y="785" font-size="3" textLength="11" lengthAdjust="spacingAndGlyphs">VERS.</text>
<text x="1018" y="794.5" font-size="3.5" textLength="149" lengthAdjust="spacingAndGlyphs">DOCUMENT SAN ALL RIGHTS RESERVED. REPRODUCTION AND DISCLOSURE PROHIBITED</text>
<text x="895" y="779.5" font-size="3" textLength="12" lengthAdjust="spacingAndGlyphs">03/03/08</text>
<text x="895" y="773" font-size="3" textLength="12" lengthAdjust="spacingAndGlyphs">03/03/08</text>
<text x="885" y="773" font-size="3">B</text>
<text x="885" y="779.5" font-size="3">A</text>
<text x="883" y="787" font-size="3" textLength="9" lengthAdjust="spacingAndGlyphs">REV</text>
<text x="895" y="787" font-size="3" textLength="12" lengthAdjust="spacingAndGlyphs">DATE</text>
<text transform="translate(879,787) rotate(-90)" font-size="4" textLength="50" lengthAdjust="spacingAndGlyphs">DRAWING  A3H</text>
</g>
<g font-family="Liberation Sans" fill="#000">
<text x="1155" y="709" font-size="9" textLength="6.5" lengthAdjust="spacingAndGlyphs">2</text>
<text x="950" y="756" font-family="Liberation Mono" font-size="8.5" textLength="113" lengthAdjust="spacingAndGlyphs">ELEC BOARD MMI UL243  V01</text>
<text x="1142" y="764.5" font-size="8.5" textLength="19" lengthAdjust="spacingAndGlyphs">1/2</text>
<text x="1044" y="787.5" font-size="8.5" textLength="10" lengthAdjust="spacingAndGlyphs">A3</text>
</g>
</svg>
</div></div>
<div id="vscroll" class="abs">
<svg width="13" height="672" style="position:absolute;left:0;top:0">
<rect x="0" y="16" width="13" height="320" fill="#dcdcdc"/>
<path d="M0 336.5 H13" stroke="#a0a0a0"/>
<path d="M3.5 10 l3 -3 l3 3" stroke="#333" fill="none" stroke-width="1.2"/>
<path d="M3.5 174.5 h6 M3.5 176.5 h6 M3.5 178.5 h6" stroke="#555"/>
<path d="M0 657.5 H13" stroke="#e0e0e0"/>
<path d="M3.5 663 l3 3 l3 -3" stroke="#333" fill="none" stroke-width="1.2"/>
</svg>
</div>
<div id="strip" class="abs"></div>
<div id="status" class="abs">
<div class="abs mono" style="left:0;top:5px;line-height:18px;color:#0a1420;letter-spacing:-1.15px">Version:1.0.0.52</div>
<div class="abs mono" style="left:1321px;top:5px;line-height:18px;color:#fff;letter-spacing:-1.2px">Current [UL243_MMI_V01_placement]</div>
</div>
</body></html>
